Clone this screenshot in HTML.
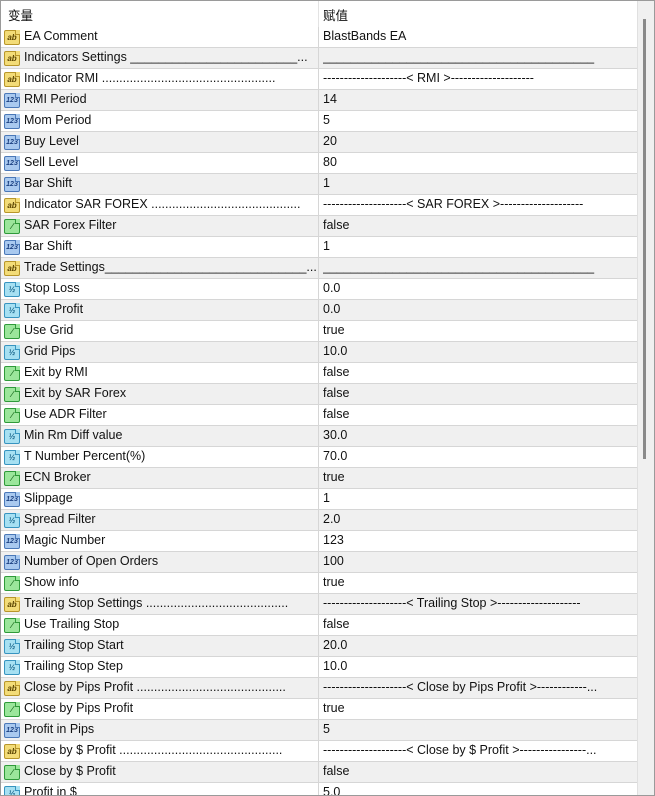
<!DOCTYPE html>
<html><head><meta charset="utf-8"><style>
*{margin:0;padding:0;box-sizing:border-box}
body{width:655px;height:796px;overflow:hidden;background:#fff;font-family:"Liberation Sans","Noto Sans CJK SC",sans-serif;font-size:12.5px;color:#111}
#wrap{position:absolute;left:0;top:0;width:655px;height:796px;border:1px solid #9a9a9a;overflow:hidden}
#hdr{position:absolute;left:0;top:0;width:636px;height:26px;background:#fff}
#hdr span{position:absolute;top:4px}
.vline{position:absolute;left:317px;top:0;width:1px;height:26px;background:#e3e3e3}
#rows{position:absolute;left:0;top:26px;width:636px}
.r{position:relative;height:21px;border-bottom:1px solid #d6d6d6;background:#fff}
.r.g{background:#f0f0f0}
.r .n{position:absolute;left:23px;top:2px;white-space:nowrap;width:292px;overflow:hidden}
.r .v{position:absolute;left:322px;top:2px;white-space:nowrap;width:310px;overflow:hidden}
.r .d{position:absolute;left:317px;top:0;width:1px;height:21px;background:#d6d6d6}
.ic{position:absolute;left:3px;top:3px;width:16px;height:15px;border:1px solid;border-radius:2px;font-size:8px;line-height:13px;text-align:center;font-weight:bold}
.ic:after{content:"";position:absolute;right:-1px;top:-1px;width:4px;height:4px;background:inherit;border-left:1px solid;border-bottom:1px solid;border-color:inherit}
.ab{background:#f3dc78;border-color:#b8962a;color:#5a4300}
.nm{background:#a9c9ef;border-color:#4a78b8;color:#1a3f80;font-size:7px}
.bo{background:#9be69b;border-color:#2f9a3a;color:#1a6a20}
.fr{background:#a6e0f2;border-color:#3794c0;color:#135f86}
#sb{position:absolute;left:636px;top:0;width:18px;height:796px;background:#f0f0f0;border-left:1px solid #e0e0e0}
#th{position:absolute;left:642px;top:18px;width:3px;height:440px;background:#8a8a8a}
</style></head><body><div id="wrap">
<div id="hdr"><span style="left:7px">变量</span><span style="left:322px">赋值</span><div class="vline"></div></div>
<div id="rows">
<div class="r"><i class="ic ab">ab</i><span class="n">EA Comment</span><span class="d"></span><span class="v">BlastBands EA</span></div>
<div class="r g"><i class="ic ab">ab</i><span class="n">Indicators Settings ________________________...</span><span class="d"></span><span class="v">_______________________________________</span></div>
<div class="r"><i class="ic ab">ab</i><span class="n">Indicator RMI ..................................................</span><span class="d"></span><span class="v">--------------------&lt; RMI &gt;--------------------</span></div>
<div class="r g"><i class="ic nm">123</i><span class="n">RMI Period</span><span class="d"></span><span class="v">14</span></div>
<div class="r"><i class="ic nm">123</i><span class="n">Mom Period</span><span class="d"></span><span class="v">5</span></div>
<div class="r g"><i class="ic nm">123</i><span class="n">Buy Level</span><span class="d"></span><span class="v">20</span></div>
<div class="r"><i class="ic nm">123</i><span class="n">Sell Level</span><span class="d"></span><span class="v">80</span></div>
<div class="r g"><i class="ic nm">123</i><span class="n">Bar Shift</span><span class="d"></span><span class="v">1</span></div>
<div class="r"><i class="ic ab">ab</i><span class="n">Indicator SAR FOREX ...........................................</span><span class="d"></span><span class="v">--------------------&lt; SAR FOREX &gt;--------------------</span></div>
<div class="r g"><i class="ic bo">⁄</i><span class="n">SAR Forex Filter</span><span class="d"></span><span class="v">false</span></div>
<div class="r"><i class="ic nm">123</i><span class="n">Bar Shift</span><span class="d"></span><span class="v">1</span></div>
<div class="r g"><i class="ic ab">ab</i><span class="n">Trade Settings_____________________________...</span><span class="d"></span><span class="v">_______________________________________</span></div>
<div class="r"><i class="ic fr">½</i><span class="n">Stop Loss</span><span class="d"></span><span class="v">0.0</span></div>
<div class="r g"><i class="ic fr">½</i><span class="n">Take Profit</span><span class="d"></span><span class="v">0.0</span></div>
<div class="r"><i class="ic bo">⁄</i><span class="n">Use Grid</span><span class="d"></span><span class="v">true</span></div>
<div class="r g"><i class="ic fr">½</i><span class="n">Grid Pips</span><span class="d"></span><span class="v">10.0</span></div>
<div class="r"><i class="ic bo">⁄</i><span class="n">Exit by RMI</span><span class="d"></span><span class="v">false</span></div>
<div class="r g"><i class="ic bo">⁄</i><span class="n">Exit by SAR Forex</span><span class="d"></span><span class="v">false</span></div>
<div class="r"><i class="ic bo">⁄</i><span class="n">Use ADR Filter</span><span class="d"></span><span class="v">false</span></div>
<div class="r g"><i class="ic fr">½</i><span class="n">Min Rm Diff value</span><span class="d"></span><span class="v">30.0</span></div>
<div class="r"><i class="ic fr">½</i><span class="n">T Number Percent(%)</span><span class="d"></span><span class="v">70.0</span></div>
<div class="r g"><i class="ic bo">⁄</i><span class="n">ECN Broker</span><span class="d"></span><span class="v">true</span></div>
<div class="r"><i class="ic nm">123</i><span class="n">Slippage</span><span class="d"></span><span class="v">1</span></div>
<div class="r g"><i class="ic fr">½</i><span class="n">Spread Filter</span><span class="d"></span><span class="v">2.0</span></div>
<div class="r"><i class="ic nm">123</i><span class="n">Magic Number</span><span class="d"></span><span class="v">123</span></div>
<div class="r g"><i class="ic nm">123</i><span class="n">Number of Open Orders</span><span class="d"></span><span class="v">100</span></div>
<div class="r"><i class="ic bo">⁄</i><span class="n">Show info</span><span class="d"></span><span class="v">true</span></div>
<div class="r g"><i class="ic ab">ab</i><span class="n">Trailing Stop Settings .........................................</span><span class="d"></span><span class="v">--------------------&lt; Trailing Stop &gt;--------------------</span></div>
<div class="r"><i class="ic bo">⁄</i><span class="n">Use Trailing Stop</span><span class="d"></span><span class="v">false</span></div>
<div class="r g"><i class="ic fr">½</i><span class="n">Trailing Stop Start</span><span class="d"></span><span class="v">20.0</span></div>
<div class="r"><i class="ic fr">½</i><span class="n">Trailing Stop Step</span><span class="d"></span><span class="v">10.0</span></div>
<div class="r g"><i class="ic ab">ab</i><span class="n">Close by Pips Profit ...........................................</span><span class="d"></span><span class="v">--------------------&lt; Close by Pips Profit &gt;------------...</span></div>
<div class="r"><i class="ic bo">⁄</i><span class="n">Close by Pips Profit</span><span class="d"></span><span class="v">true</span></div>
<div class="r g"><i class="ic nm">123</i><span class="n">Profit in Pips</span><span class="d"></span><span class="v">5</span></div>
<div class="r"><i class="ic ab">ab</i><span class="n">Close by $ Profit ...............................................</span><span class="d"></span><span class="v">--------------------&lt; Close by $ Profit &gt;----------------...</span></div>
<div class="r g"><i class="ic bo">⁄</i><span class="n">Close by $ Profit</span><span class="d"></span><span class="v">false</span></div>
<div class="r"><i class="ic fr">½</i><span class="n">Profit in $</span><span class="d"></span><span class="v">5.0</span></div>
</div>
<div id="sb"></div><div id="th"></div>
</div></body></html>
